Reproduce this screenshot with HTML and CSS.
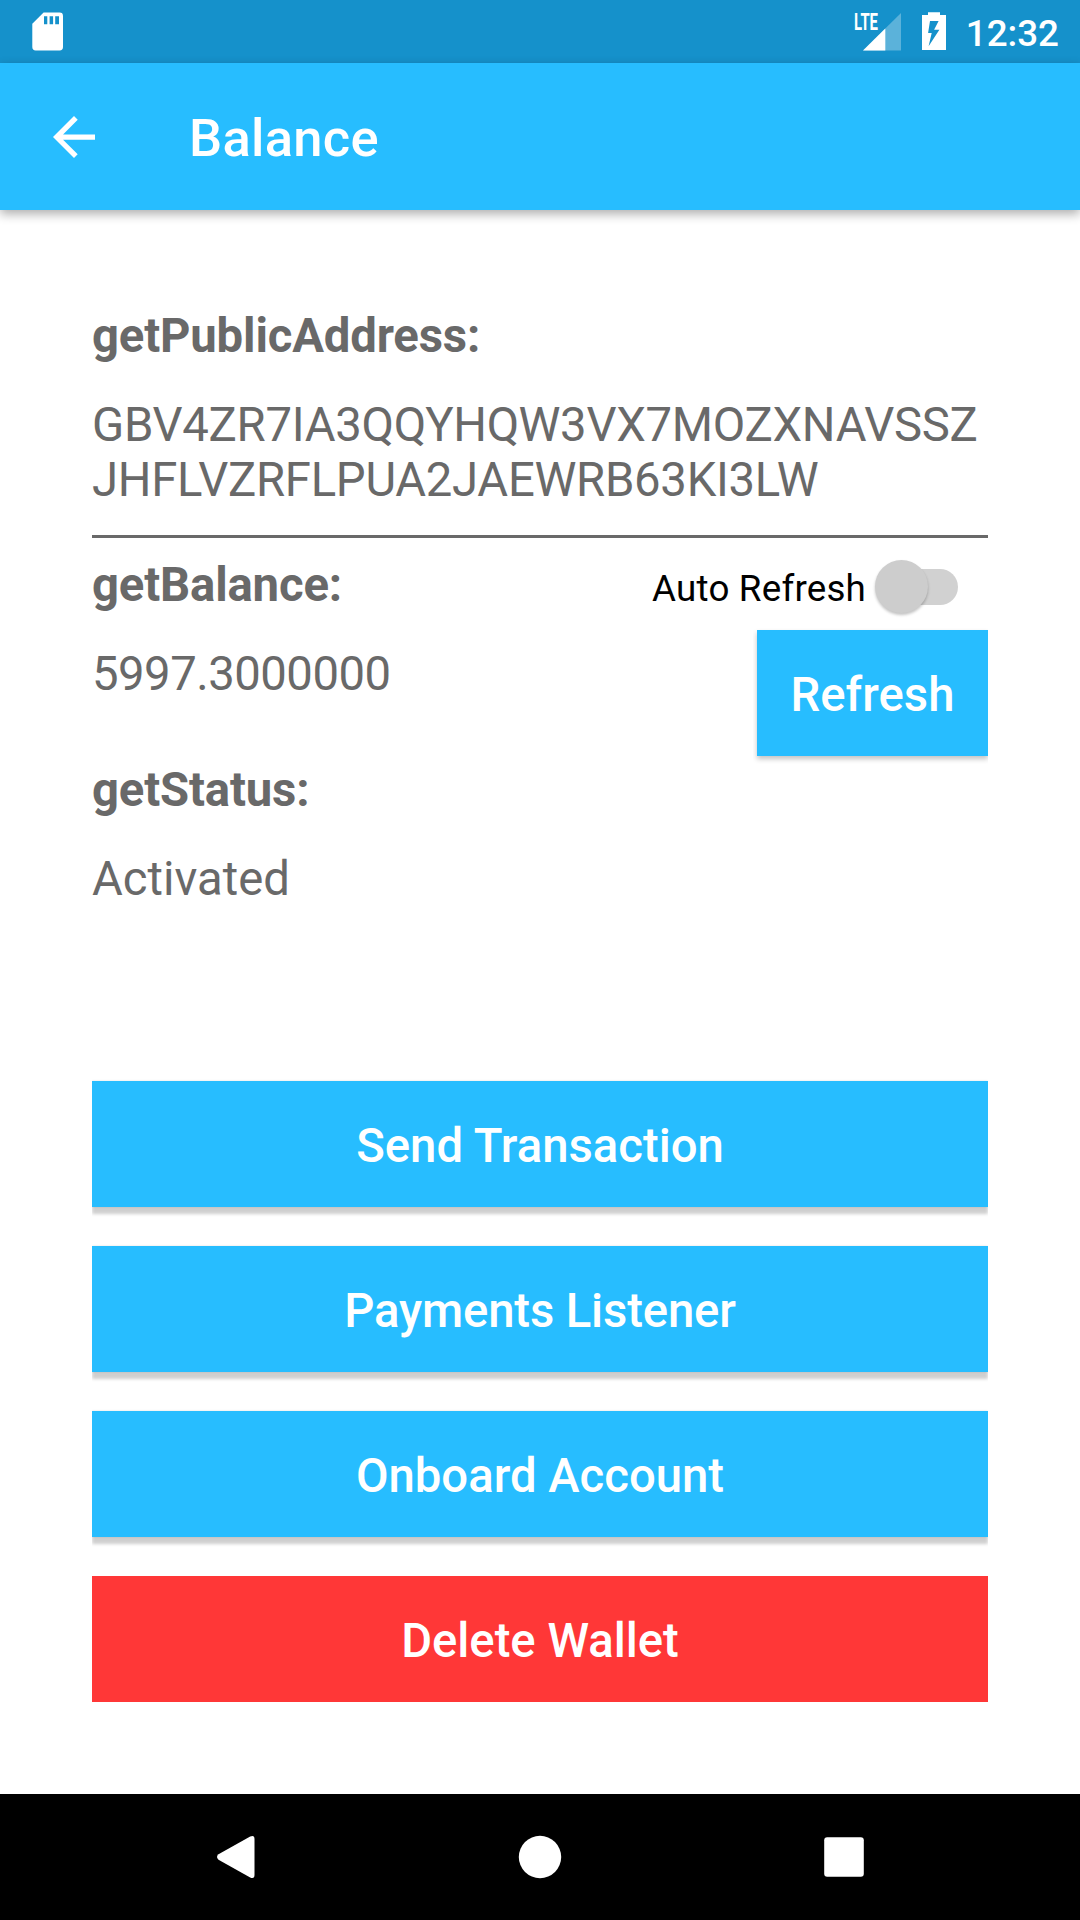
FILE: index.html
```html
<!DOCTYPE html>
<html lang="en">
<head>
<meta charset="utf-8">
<title>Balance</title>
<link rel="stylesheet" href="styles.css">
</head>
<body>
<div class="screen">
  <div class="status-bar">
    <svg class="sd-icon" width="32" height="40" viewBox="0 0 32 40" fill="#fff">
      <path fill-rule="evenodd" d="M11.600 .5H27.600Q31 .5 31 3.900V35.100Q31 38.500 27.600 38.500H3.700Q.3 38.500 .3 35.100V11.800ZM12 4.300V12.300H15.300V4.300ZM17.600 4.300V12.300H21.100V4.300ZM23.200 4.300V12.300H27V4.300Z"/>
    </svg>
    <div class="status-right">
      <svg class="signal" width="48" height="40" viewBox="0 0 48 40">
        <path d="M47 1V38.500H9Z" fill="#fff" fill-opacity=".3"/>
        <path d="M31.300 16.500V38.500H9Z" fill="#fff"/>
        <text class="network" x="0" y="18" textLength="24" lengthAdjust="spacingAndGlyphs">LTE</text>
      </svg>
      <svg class="battery" width="24" height="40" viewBox="0 0 24 40" fill="#fff">
        <path fill-rule="evenodd" d="M6 .3H18V3H24V38H0V3H6ZM8 9 6.100 21H9.700L6.600 34.300 17.400 17.700H12.100L16.600 9Z"/>
      </svg>
      <span class="clock">12:32</span>
    </div>
  </div>

  <header class="app-bar">
    <svg width="42" height="42" viewBox="0 0 16 16" fill="#fff">
      <path d="M16 7H3.830l5.590-5.590L8 0 0 8l8 8 1.410-1.410L3.830 9H16z"/>
    </svg>
    <h1 class="title">Balance</h1>
  </header>

  <main class="content">
    <section class="field address">
      <h2 class="label">getPublicAddress:</h2>
      <p class="value">GBV4ZR7IA3QQYHQW3VX7MOZXNAVSSZ<br>JHFLVZRFLPUA2JAEWRB63KI3LW</p>
    </section>

    <div class="account">
      <div class="details">
        <section class="field">
          <h2 class="label">getBalance:</h2>
          <p class="value amount">5997.3000000</p>
        </section>
        <section class="field">
          <h2 class="label">getStatus:</h2>
          <p class="value">Activated</p>
        </section>
      </div>
      <div class="refresh">
        <label class="auto"><span class="auto-text">Auto Refresh</span><span class="switch"><span class="thumb"></span></span></label>
        <button class="btn btn-refresh">Refresh</button>
      </div>
    </div>

    <div class="actions">
      <button class="btn">Send Transaction</button>
      <button class="btn btn-payments">Payments Listener</button>
      <button class="btn">Onboard Account</button>
      <button class="btn btn-delete">Delete Wallet</button>
    </div>
  </main>

  <nav class="nav-bar">
    <svg width="44" height="44" viewBox="0 0 44 44" fill="#fff"><path d="M36.200 1.500Q40.500-.3 40.500 4V40Q40.500 44.300 36.200 42.500L4.500 24.700Q1.500 22 4.500 19.300Z"/></svg>
    <svg width="44" height="44" viewBox="0 0 44 44" fill="#fff"><circle cx="22" cy="22" r="21.200"/></svg>
    <svg width="44" height="44" viewBox="0 0 44 44" fill="#fff"><rect x="2.200" y="2.200" width="39.600" height="39.600" rx="3"/></svg>
  </nav>
</div>
</body>
</html>
```
FILE: styles.css
```css
* { box-sizing: border-box; }

body {
  margin: 0;
  background: #fff;
  font-family: Roboto, sans-serif;
}

h1, h2, p { margin: 0; }

.screen {
  display: flex;
  flex-direction: column;
  width: 1080px;
  height: 1920px;
}

.status-bar {
  display: flex;
  flex: none;
  justify-content: space-between;
  height: 63px;
  padding: 12px 21px 0 32px;
  background: #1591cb;
}

.status-right {
  display: flex;
}

.signal {
  margin-right: 20px;
  overflow: visible;
}

.battery { margin-right: 20px; }

.network {
  fill: #fff;
  font-size: 23px;
  font-weight: 700;
}

.clock {
  color: #fff;
  font-size: 36.75px;
  font-weight: 500;
  line-height: 43px;
}

.app-bar {
  display: flex;
  flex: none;
  align-items: center;
  gap: 94px;
  height: 147px;
  padding-left: 53px;
  background: #27bdff;
  box-shadow: 0 4px 10px rgba(0, 0, 0, .32);
}

.title {
  padding-top: 2px;
  color: #fff;
  font-size: 52.5px;
  font-weight: 500;
  line-height: 62px;
  letter-spacing: .3px;
}

.content {
  flex: 1;
  padding: 99px 92px 0;
}

.field {
  display: flex;
  flex-direction: column;
  gap: 34px;
}

.label,
.value {
  color: #696969;
  font-size: 47.25px;
  line-height: 55px;
}

.label {
  font-weight: 700;
  letter-spacing: -.16px;
}

.value { white-space: nowrap; }

.address {
  height: 229px;
  border-bottom: 3px solid #696969;
}

.address .value { letter-spacing: -.28px; }

.amount { letter-spacing: -.5px; }

.account {
  display: flex;
  justify-content: space-between;
  height: 543px;
  padding-top: 20px;
}

.details {
  display: flex;
  flex-direction: column;
  gap: 61px;
}

.refresh {
  display: flex;
  flex-direction: column;
  align-items: flex-end;
  gap: 15px;
}

.auto {
  display: flex;
  align-items: center;
  gap: 9px;
  height: 57px;
  margin-right: 30px;
  color: #000;
  font-size: 36.75px;
  line-height: 43px;
}

.auto-text {
  padding-top: 3px;
  letter-spacing: .2px;
}

.switch {
  position: relative;
  width: 83px;
  height: 53px;
}

.switch::before {
  content: "";
  position: absolute;
  top: 9px;
  right: 0;
  width: 72px;
  height: 36px;
  border-radius: 18px;
  background: #d1d1d1;
}

.thumb {
  position: relative;
  display: block;
  width: 53px;
  height: 53px;
  border-radius: 50%;
  background: #cdcdcd;
  box-shadow: 0 2px 3px rgba(0, 0, 0, .24);
}

.btn {
  height: 126px;
  padding: 5px 0 0;
  border: 0;
  background: #27bdff;
  box-shadow: 0 7px 3px rgba(0, 0, 0, .19), 0 0 2px rgba(0, 0, 0, .12);
  clip-path: inset(-3px 0 -12px 0);
  color: #fff;
  font-family: inherit;
  font-size: 47.25px;
  font-weight: 500;
  line-height: 55px;
}

.btn-refresh {
  width: 231px;
  box-shadow: 0 3px 5px rgba(0, 0, 0, .24);
  clip-path: inset(-3px 0 -12px -4px);
}

.btn-payments { letter-spacing: -.14px; }

.actions {
  display: flex;
  flex-direction: column;
  gap: 39px;
}

.btn-delete {
  background: #ff3737;
  box-shadow: none;
}

.nav-bar {
  display: flex;
  flex: none;
  align-items: center;
  justify-content: space-between;
  height: 126px;
  padding: 0 214px;
  background: #000;
}
```
